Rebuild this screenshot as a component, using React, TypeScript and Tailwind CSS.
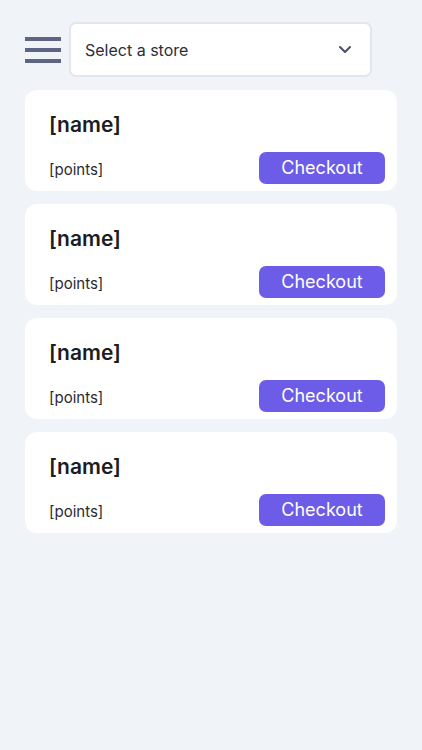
import React from "react";

function Card() {
  return (
    <div className="h-[101px] bg-white rounded-[12px] pl-6 pr-3 pt-[20px] flex flex-col">
      <div className="h-[28px] flex items-center text-[21px] font-semibold text-[#1c1c24] leading-none">[name]</div>
      <div className="mt-[14px] h-[32px] flex items-center justify-between">
        <span className="text-[15px] leading-none text-[#2a2a33] pt-[2px]">[points]</span>
        <button className="w-[126px] h-[32px] rounded-[7px] bg-[#6c5ce7] text-white text-[18px] leading-none flex items-center justify-center">
          Checkout
        </button>
      </div>
    </div>
  );
}

export default function App() {
  return (
    <div
      className="min-h-[750px] bg-[#f0f3f8] px-[25px] pt-[22px]"
      style={{ fontFamily: "Inter, 'Noto Sans', sans-serif" }}
    >
      <div className="flex items-center h-[55px]">
        <div className="w-[36px] h-[26px] flex flex-col justify-between mr-[8px]">
          <div className="h-[4px] bg-[#5e6483]" />
          <div className="h-[4px] bg-[#5e6483]" />
          <div className="h-[4px] bg-[#5e6483]" />
        </div>
        <div className="w-[303px] h-[55px] bg-white border-2 border-[#e3e6ec] rounded-[7px] flex items-center justify-between pl-[14px] pr-[18px]">
          <span className="text-[16px] text-[#2e2e36]">Select a store</span>
          <svg width="14" height="9" viewBox="0 0 14 9" fill="none">
            <path d="M2 2l5 5 5-5" stroke="#4a4f66" strokeWidth="2" strokeLinecap="round" strokeLinejoin="round" />
          </svg>
        </div>
      </div>
      <div className="mt-[13px] flex flex-col gap-[13px]">
        <Card />
        <Card />
        <Card />
        <Card />
      </div>
    </div>
  );
}
